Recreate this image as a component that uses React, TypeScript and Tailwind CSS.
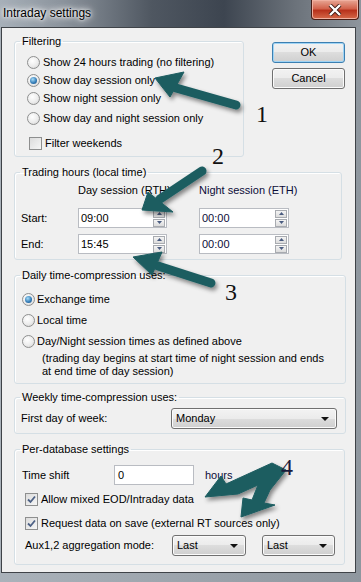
import React from 'react';

const ui = "font-['Liberation_Sans',Arial,sans-serif] text-[11px] text-black";

function Radio({ checked }: { checked?: boolean }) {
  return (
    <span className="flex w-[13px] h-[13px] shrink-0 items-center justify-center rounded-full border border-[#8e8f8f] bg-[radial-gradient(circle_at_40%_35%,#ffffff,#ececec_55%,#cfcfcf)]">
      {checked && (
        <span className="w-[7px] h-[7px] rounded-full bg-[radial-gradient(circle_at_40%_35%,#a6dcf8,#2f78b4_60%,#1d4c78)]" />
      )}
    </span>
  );
}

function Check({ checked }: { checked?: boolean }) {
  return (
    <span className="flex w-[13px] h-[13px] shrink-0 items-center justify-center border border-[#8e8f8f] bg-[linear-gradient(135deg,#dcdcdc,#f6f6f6)]">
      {checked && (
        <svg width="9" height="9" viewBox="0 0 9 9">
          <path d="M1 4.5 L3.5 7 L8 1.5" fill="none" stroke="#4d6185" strokeWidth="1.8" />
        </svg>
      )}
    </span>
  );
}

// groupbox: legend sits on the border, content padding on an inner div
function Group({ title, className, inner, children }: { title: string; className?: string; inner?: string; children: React.ReactNode }) {
  return (
    <fieldset className={`border border-[#d5dfe5] rounded-[3px] shadow-[inset_1px_1px_0_#fff] ${className ?? ''}`}>
      <legend className="ml-[5px] px-[2px] leading-[15px]">{title}</legend>
      <div className={inner}>{children}</div>
    </fieldset>
  );
}

function Spin() {
  return (
    <div className="flex flex-col gap-[1px] mr-[1px]">
      <span className="flex w-[12px] h-[8px] items-center justify-center border border-[#a8abb0] bg-[linear-gradient(#f4f4f4,#dcdcdc)]">
        <svg width="5" height="3" viewBox="0 0 5 3"><path d="M0 3 L2.5 0 L5 3Z" fill="#4a5c80" /></svg>
      </span>
      <span className="flex w-[12px] h-[8px] items-center justify-center border border-[#a8abb0] bg-[linear-gradient(#f4f4f4,#dcdcdc)]">
        <svg width="5" height="3" viewBox="0 0 5 3"><path d="M0 0 L5 0 L2.5 3Z" fill="#4a5c80" /></svg>
      </span>
    </div>
  );
}

function TimeBox({ value, w, navy }: { value: string; w: string; navy?: boolean }) {
  return (
    <div className={`flex h-[20px] ${w} items-center justify-between border border-[#b9bcc2] bg-white pl-[2px]`}>
      <span className={navy ? 'text-[#0c0c38]' : ''}>{value}</span>
      <Spin />
    </div>
  );
}

function Combo({ value, w }: { value: string; w: string }) {
  return (
    <div className={`flex h-[21px] ${w} items-center justify-between rounded-[3px] border border-[#707070] bg-[linear-gradient(#f3f3f3,#ebebeb_50%,#dddddd_50%,#cfcfcf)] shadow-[inset_0_0_0_1px_#fbfbfb] pl-[4px] pr-[7px]`}>
      <span>{value}</span>
      <svg width="8" height="4" viewBox="0 0 8 4"><path d="M0 0 L8 0 L4 4Z" fill="#111" /></svg>
    </div>
  );
}

function Button({ label, def }: { label: string; def?: boolean }) {
  return (
    <div
      className={`flex h-[21px] w-[73px] items-center justify-center rounded-[3px] border ${
        def ? 'border-[#3c7fb1] shadow-[inset_0_0_0_1px_#9fd4f5]' : 'border-[#707070] shadow-[inset_0_0_0_1px_#fbfbfb]'
      } bg-[linear-gradient(#f2f2f2,#ebebeb_50%,#dddddd_50%,#cfcfcf)]`}
    >
      {label}
    </div>
  );
}

function Arrows() {
  return (
    <svg className="absolute left-0 top-0 pointer-events-none" width="361" height="582" viewBox="0 0 361 582">
      <defs>
        <filter id="sh" x="-30%" y="-30%" width="160%" height="160%">
          <feDropShadow dx="2" dy="3" stdDeviation="2" floodColor="#000" floodOpacity="0.45" />
        </filter>
      </defs>
      <g fill="#1c5d61" stroke="#1c5d61" filter="url(#sh)">
        <line x1="236" y1="105" x2="176" y2="88" strokeWidth="9" strokeLinecap="round" />
        <polygon points="155,78 184,72 170,97" strokeWidth="1" />
        <line x1="202" y1="171" x2="160" y2="199" strokeWidth="9" strokeLinecap="round" />
        <polygon points="142,210 148,192 173,212" strokeWidth="1" />
        <line x1="211" y1="283" x2="158" y2="266" strokeWidth="9" strokeLinecap="round" />
        <polygon points="133,257 162,252 152,275" strokeWidth="1" />
        <polygon
          points="272,463 286,470 270,490 264,503 275,505 241,517 243,498 252,500 258,485 238,494 205,497 221,476 226,484"
          strokeWidth="1"
          strokeLinejoin="round"
        />
      </g>
      <g className="font-['Liberation_Serif',serif]" fontSize="24">
        <text x="256" y="122" fill="#111">1</text>
        <text x="212" y="164" fill="#111">2</text>
        <text x="225" y="300" fill="#111">3</text>
        <text x="281" y="475" fill="#1a1a3a">4</text>
      </g>
    </svg>
  );
}

export default function App() {
  return (
    <div className={`${ui} relative w-[361px] h-[582px] overflow-hidden bg-[linear-gradient(to_right,#aab2ba,#8f979f)]`}>
      {/* title bar */}
      <div className="flex h-[27px] items-start justify-between bg-[linear-gradient(to_right,#a7b0b9,#8a929b_18%,#4f5761_42%,#3d4550_62%,#6c737b_82%,#8e959d)]">
        <span className="mt-[6px] ml-[3px] text-[12px] leading-[15px] text-black [text-shadow:0_0_6px_#fff,0_0_10px_#fff,0_0_3px_#fff]">
          Intraday settings
        </span>
        <div className="mr-[2px] flex h-[20px] w-[48px] items-center justify-center rounded-b-[4px] border border-t-0 border-[#4a1e16] bg-[linear-gradient(#e8a795,#d2634c_45%,#b8321c_55%,#d66a4a)] shadow-[inset_0_0_0_1px_#f0b0a0]">
          <svg width="14" height="12" viewBox="0 0 14 12">
            <path d="M2 1 L12 11 M12 1 L2 11" stroke="#3a1a14" strokeWidth="4" />
            <path d="M2 1 L12 11 M12 1 L2 11" stroke="#fff" strokeWidth="2.4" />
          </svg>
        </div>
      </div>

      {/* dialog body */}
      <div className="ml-[1px] mr-[5px] h-[546px] border border-[#3f4348] bg-[#f0f0f0] whitespace-nowrap">
        <div className="flex">
          <Group title="Filtering" className="ml-[12px] mt-[6px] w-[230px]" inner="pl-[12px] pb-[4px] pt-[4px]">
            <div className="flex h-[18px] items-center"><Radio /><span className="ml-[3px]">Show 24 hours trading (no filtering)</span></div>
            <div className="flex h-[18px] items-center"><Radio checked /><span className="ml-[3px]">Show day session only</span></div>
            <div className="flex h-[18px] items-center"><Radio /><span className="ml-[3px]">Show night session only</span></div>
            <div className="mt-[2px] flex h-[18px] items-center"><Radio /><span className="ml-[3px]">Show day and night session only</span></div>
            <div className="mt-[7px] ml-[2px] flex h-[18px] items-center"><Check /><span className="ml-[3px]">Filter weekends</span></div>
          </Group>
          <div className="ml-[28px] mt-[14px] flex flex-col gap-[5px]">
            <Button label="OK" def />
            <Button label="Cancel" />
          </div>
        </div>

        <Group title="Trading hours (local time)" className="ml-[12px] mt-[8px] w-[328px]" inner="pl-[6px] pt-[3px] pb-[5px]">
          <div className="grid grid-cols-[57px_89px_32px_90px] items-center">
            <span />
            <span className="leading-[15px]">Day session (RTH)</span>
            <span />
            <span className="leading-[15px] text-[#0c0c38]">Night session (ETH)</span>
            <span className="mt-[10px]">Start:</span>
            <div className="mt-[10px]"><TimeBox value="09:00" w="w-[89px]" /></div>
            <span />
            <div className="mt-[10px]"><TimeBox value="00:00" w="w-[90px]" navy /></div>
            <span className="mt-[6px]">End:</span>
            <div className="mt-[6px]"><TimeBox value="15:45" w="w-[89px]" /></div>
            <span />
            <div className="mt-[6px]"><TimeBox value="00:00" w="w-[90px]" navy /></div>
          </div>
        </Group>

        <Group title="Daily time-compression uses:" className="ml-[12px] mt-[8px] w-[332px]" inner="pl-[7px] pt-[6px] pb-[5px]">
          <div className="flex h-[21px] items-center"><Radio checked /><span className="ml-[2px]">Exchange time</span></div>
          <div className="flex h-[21px] items-center"><Radio /><span className="ml-[2px]">Local time</span></div>
          <div className="flex h-[21px] items-center"><Radio /><span className="ml-[2px]">Day/Night session times as defined above</span></div>
          <p className="ml-[20px] leading-[13px]">
            (trading day begins at start time of night session and ends
            <br />
            at end time of day session)
          </p>
        </Group>

        <Group title="Weekly time-compression uses:" className="ml-[12px] mt-[6px] w-[332px]" inner="pl-[6px] pt-[3px] pb-[4px]">
          <div className="flex items-center">
            <span className="w-[150px]">First day of week:</span>
            <Combo value="Monday" w="w-[166px]" />
          </div>
        </Group>

        <Group title="Per-database settings" className="ml-[12px] mt-[8px] w-[331px]" inner="pl-[7px] pt-[8px] pb-[8px]">
          <div className="flex items-center">
            <span className="w-[92px]">Time shift</span>
            <div className="flex h-[20px] w-[80px] items-center border border-[#b9bcc2] bg-white pl-[3px]">0</div>
            <span className="ml-[11px] text-[#0c0c38]">hours</span>
          </div>
          <div className="ml-[3px] mt-[5px] flex h-[18px] items-center"><Check checked /><span className="ml-[3px]">Allow mixed EOD/Intraday data</span></div>
          <div className="ml-[3px] mt-[6px] flex h-[18px] items-center"><Check checked /><span className="ml-[3px]">Request data on save (external RT sources only)</span></div>
          <div className="ml-[3px] mt-[3px] flex items-center">
            <span className="w-[147px]">Aux1,2 aggregation mode:</span>
            <Combo value="Last" w="w-[74px]" />
            <div className="ml-[16px]"><Combo value="Last" w="w-[73px]" /></div>
          </div>
        </Group>
      </div>

      <Arrows />
    </div>
  );
}
